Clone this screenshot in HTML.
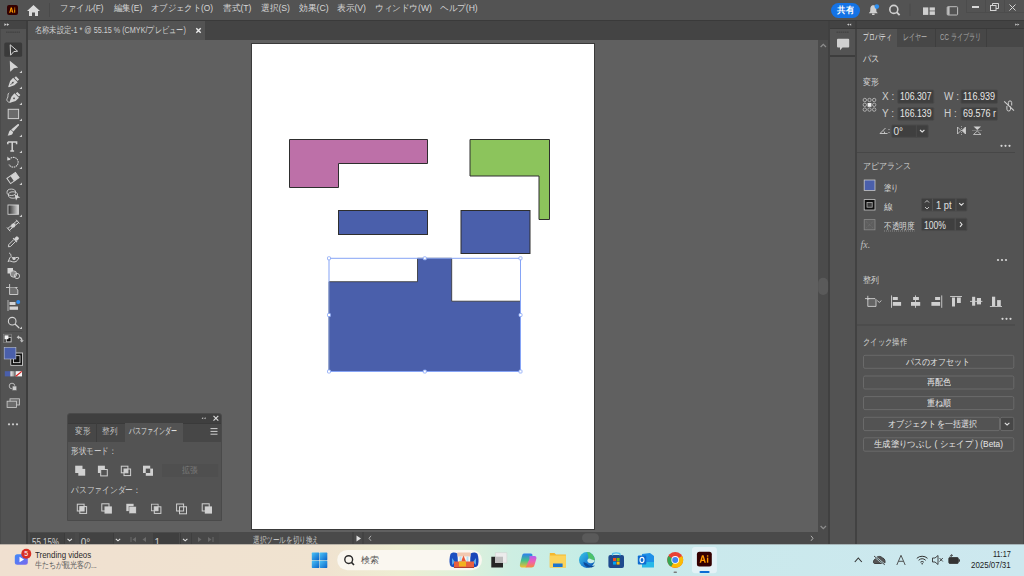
<!DOCTYPE html>
<html><head><meta charset="utf-8">
<style>
*{margin:0;padding:0;box-sizing:border-box}
html,body{width:1024px;height:576px;overflow:hidden;background:#606060;font-family:"Liberation Sans",sans-serif}
.a{position:absolute}
.t{position:absolute;white-space:nowrap;color:#d6d6d6;font-size:9px;line-height:11px;transform-origin:0 50%}
svg{position:absolute;overflow:visible}
.ic{fill:none;stroke:#d4d4d4;stroke-width:1}
.fi{fill:#d4d4d4}
</style></head><body>
<!-- MENUBAR -->
<div class="a" style="left:0;top:0;width:1024px;height:20px;background:#535353"></div>
<div class="a" style="left:0;top:20px;width:1024px;height:1px;background:#3a3a3a"></div>
<div class="a" style="left:7px;top:5px;width:11px;height:10px;background:#330000;border-radius:2px"></div>
<svg style="left:0;top:0" width="20" height="20" viewBox="0 0 20 20"><path d="M9.2 12.7 L10.7 7.5 H11.9 L13.4 12.7 H12.3 L12 11.6 H10.6 L10.3 12.7 Z M10.85 10.7 H11.75 L11.3 8.9 Z" fill="#ff9a00" fill-rule="evenodd"/><rect x="14.2" y="9.3" width="1" height="3.4" fill="#ff9a00"/><rect x="14.2" y="7.6" width="1" height="1" fill="#ff9a00"/></svg>
<svg style="left:27px;top:5px" width="13" height="11" viewBox="0 0 13 11"><path d="M6.5 0 L13 6 L11 6 L11 11 L8 11 L8 7.5 L5 7.5 L5 11 L2 11 L2 6 L0 6 Z" fill="#dcdcdc"/></svg>
<div class="a" style="left:49px;top:3px;width:1px;height:14px;background:#4a4a4a"></div>
<div class="t f" style="left:60px;top:3px;width:43.5px">ファイル(F)</div>
<div class="t f" style="left:113.5px;top:3px;width:28.3px">編集(E)</div>
<div class="t f" style="left:151px;top:3px;width:62px">オブジェクト(O)</div>
<div class="t f" style="left:223px;top:3px;width:28.5px">書式(T)</div>
<div class="t f" style="left:261px;top:3px;width:29px">選択(S)</div>
<div class="t f" style="left:298.6px;top:3px;width:29.6px">効果(C)</div>
<div class="t f" style="left:337px;top:3px;width:29px">表示(V)</div>
<div class="t f" style="left:375px;top:3px;width:57px">ウィンドウ(W)</div>
<div class="t f" style="left:440.3px;top:3px;width:37.7px">ヘルプ(H)</div>
<!-- right menubar icons -->
<div class="a" style="left:831px;top:2.5px;width:29px;height:15.5px;background:#1473e6;border-radius:8px"></div>
<div class="t f" style="left:837px;top:4.5px;width:17px;color:#fff;font-weight:bold">共有</div>
<svg style="left:0;top:0" width="966" height="20" viewBox="0 0 966 20">
<path d="M873.3 5.2 C870.8 5.2 870.3 7.5 870.3 9.3 L870.2 11.6 L868.8 13.2 H877.8 L876.4 11.6 L876.3 9.3 C876.3 7.5 875.8 5.2 873.3 5.2Z" fill="#cfcfcf"/>
<path d="M872 13.6 H874.6 V14.4 C874.6 15.2 872 15.2 872 14.4Z" fill="#cfcfcf"/>
<circle cx="876.8" cy="6.6" r="2.3" fill="#2d8ff0"/>
<circle cx="893.8" cy="9.4" r="4" fill="none" stroke="#d0d0d0" stroke-width="1.6"/>
<path d="M896.6 12.2 L899.6 15.2" stroke="#d0d0d0" stroke-width="1.8"/>
<rect x="909.5" y="3.5" width="1" height="12.5" fill="#4b4b4b"/>
<rect x="923" y="7.4" width="5.3" height="7.5" fill="#cfcfcf"/>
<rect x="929.6" y="7.4" width="5.3" height="3.2" fill="#cfcfcf"/>
<rect x="929.6" y="11.3" width="5.3" height="3.6" fill="#cfcfcf"/>
<rect x="947.2" y="6.7" width="10.4" height="8.3" rx="0.8" fill="none" stroke="#bdbdbd" stroke-width="1"/>
<rect x="947.4" y="7" width="2.2" height="7.8" fill="#bdbdbd"/>
</svg>
<div class="a" style="left:966px;top:-1px;width:59px;height:13.5px;border:1px solid #4c4c4c;border-top:none"></div>
<div class="a" style="left:985px;top:0;width:1px;height:12.5px;background:#4c4c4c"></div>
<div class="a" style="left:1004px;top:0;width:1px;height:12.5px;background:#4c4c4c"></div>
<div class="a" style="left:972px;top:6px;width:7px;height:1.5px;background:#d8d8d8"></div>
<svg style="left:989.5px;top:3px" width="9" height="8" viewBox="0 0 9 8"><rect x="0.5" y="2.5" width="5.5" height="5" class="ic" stroke="#d8d8d8"/><path d="M2.5 2.5 V0.5 H8.5 V5.5 H6" class="ic" stroke="#d8d8d8"/></svg>
<svg style="left:1009px;top:3.5px" width="7" height="7" viewBox="0 0 7 7"><path d="M0.5 0.5 L6.5 6.5 M6.5 0.5 L0.5 6.5" class="ic" stroke="#d8d8d8" stroke-width="1.3"/></svg>

<!-- TABROW -->
<div class="a" style="left:28px;top:21px;width:800px;height:19px;background:#444444"></div>
<div class="a" style="left:28px;top:21px;width:177px;height:18.5px;background:#535353"></div>
<div class="t f" style="left:35px;top:25px;width:151px;color:#d0d0d0">名称未設定-1 * @ 55.15 % (CMYK/プレビュー)</div>
<svg style="left:196px;top:27.5px" width="5" height="5" viewBox="0 0 5 5"><path d="M0.3 0.3 L4.7 4.7 M4.7 0.3 L0.3 4.7" stroke="#ececec" stroke-width="1.4"/></svg>

<!-- TOOLBAR -->
<div class="a" style="left:0;top:21px;width:26px;height:523px;background:#535353"></div>
<div class="a" style="left:0;top:21px;width:26px;height:7.5px;background:#444444"></div>
<div class="a" style="left:26px;top:21px;width:2px;height:523px;background:#3d3d3d"></div>
<div class="a" style="left:0;top:28.5px;width:1px;height:516px;background:#4a4a4a"></div>
<svg style="left:0;top:0" width="28" height="440" viewBox="0 0 28 440">
<path d="M4.4 23.2 L6.7 24.6 L4.4 26 Z M6.9 23.2 L9.2 24.6 L6.9 26 Z" fill="#d0d0d0"/>
<path d="M6 32.2 H20" stroke="#454545" stroke-width="1.6" stroke-dasharray="1.6 0.5"/>
<rect x="4.3" y="42.5" width="17.8" height="14.2" rx="1.5" fill="#3a3a3a"/>
<path d="M10.2 44.8 L17.6 51.2 L13.8 51.6 L10.6 55.2 Z" fill="none" stroke="#d6d6d6" stroke-width="1"/>
<path d="M9.8 60.8 L18.2 67.6 L14 68.2 L10.2 71.8 Z" fill="#d4d4d4"/>
<g fill="#cfcfcf">
<path d="M22 70.4 V73 H19.4 Z"/><path d="M22 86.4 V89 H19.4 Z"/><path d="M22 102.4 V105 H19.4 Z"/><path d="M22 118.4 V121 H19.4 Z"/><path d="M22 134.4 V137 H19.4 Z"/>
<path d="M22 150.4 V153 H19.4 Z"/><path d="M22 166.4 V169 H19.4 Z"/><path d="M22 182.4 V185 H19.4 Z"/><path d="M22 214.4 V217 H19.4 Z"/><path d="M22 326.4 V329 H19.4 Z"/>
</g>
<!-- pen -->
<g transform="translate(13.3 82.1) rotate(45)">
<path d="M-2.2 -6 H2.2 V-3.8 H-2.2 Z M-3.2 -3 H3.2 L3 1.5 L0.4 6.8 L-0.4 6.8 L-3 1.5 Z" fill="#d4d4d4"/>
<path d="M0 -0.5 V4" stroke="#535353" stroke-width="0.8"/><circle cx="0" cy="0.8" r="0.9" fill="#535353"/>
</g>
<!-- curvature pen -->
<g transform="translate(14.6 97.7) rotate(45)">
<path d="M-2.2 -6 H2.2 V-3.8 H-2.2 Z M-3.2 -3 H3.2 L3 1.5 L0.4 6.8 L-0.4 6.8 L-3 1.5 Z" fill="#d4d4d4"/>
<circle cx="0" cy="0.8" r="0.9" fill="#535353"/>
</g>
<path d="M9.2 92.8 C7 93.8 8.8 96.5 7.2 98.5 C6 100.2 7.8 102.8 10.4 102.2" fill="none" stroke="#d4d4d4" stroke-width="0.9"/>
<!-- rect -->
<rect x="8.2" y="109.3" width="10.4" height="9.3" fill="#6b6b6b" stroke="#cfcfcf" stroke-width="1"/>
<!-- brush -->
<path d="M17.6 124.2 C18.6 123.6 19.4 124.4 18.8 125.4 L13.4 131.6 L11.2 129.6 Z" fill="#d4d4d4"/>
<path d="M10.9 130.1 C8.8 130.4 9.2 133.4 7.6 135.6 C10.8 135.6 13.2 134.4 13 132 Z" fill="#d4d4d4"/>
<!-- type -->
<path d="M7.8 142 H16.6 V144.3 M7.8 142 V144.3 M12.2 142 V150.7 M10.3 150.9 H14.1" fill="none" stroke="#d4d4d4" stroke-width="1.5"/>
<!-- rotate -->
<path d="M9.2 159.5 A4.9 4.9 0 1 1 8.9 164.5" fill="none" stroke="#d4d4d4" stroke-width="1.1" stroke-dasharray="1.5 0.7"/>
<path d="M7.4 156.6 L10.6 159.8 L7.2 160.6 Z" fill="#d4d4d4"/>
<!-- eraser -->
<g transform="translate(13 178) rotate(-35)">
<rect x="-5.2" y="-3.2" width="10.4" height="6.4" fill="none" stroke="#d4d4d4" stroke-width="1"/>
<rect x="-1" y="-3.2" width="6.2" height="6.4" fill="#d4d4d4"/>
</g>
<!-- shape builder -->
<ellipse cx="11.3" cy="192.3" rx="4.3" ry="3.2" fill="none" stroke="#d4d4d4" stroke-width="0.9"/>
<ellipse cx="13" cy="195" rx="4.6" ry="3.2" fill="none" stroke="#d4d4d4" stroke-width="0.9"/>
<path d="M14.5 194 L20.3 197.5 L17.5 198.1 L16 200.5 Z" fill="#d4d4d4"/>
<!-- gradient -->
<defs><linearGradient id="gr" x1="0" x2="1" y1="0" y2="0"><stop offset="0" stop-color="#2a2a2a"/><stop offset="1" stop-color="#d8d8d8"/></linearGradient>
<linearGradient id="gr2" x1="0" x2="1"><stop offset="0" stop-color="#999"/><stop offset="1" stop-color="#eee"/></linearGradient></defs>
<rect x="8" y="205" width="10.5" height="9.3" fill="url(#gr)" stroke="#d0d0d0" stroke-width="0.9"/>
<!-- width -->
<g transform="translate(13.2 225.5) rotate(-40)">
<path d="M-6 -1.2 H6 M-6 1.2 H6 M-6 -2.5 V2.5 M6 -2.5 V2.5" fill="none" stroke="#d4d4d4" stroke-width="0.9"/>
<path d="M-3 0 L0 -2.2 L3 0 L0 2.2 Z" fill="#d4d4d4"/>
</g>
<!-- eyedropper -->
<g transform="translate(13.2 242) rotate(45)">
<rect x="-1.8" y="-7" width="3.6" height="4.2" rx="1.2" fill="#d4d4d4"/>
<path d="M-2.8 -2.6 H2.8" stroke="#d4d4d4" stroke-width="1"/>
<path d="M-1.3 -2.2 V5 L0 6.8 L1.3 5 V-2.2" fill="none" stroke="#d4d4d4" stroke-width="0.9"/>
</g>
<!-- blend -->
<path d="M9 253 C12 254 10 256 12 257.5 C14.5 259.5 16.5 256 19 258 C17.5 259.5 17.5 261.8 14 262 C11.5 262 10.5 260 8 261.5 C9.5 259.5 9 258.3 10.5 257" fill="none" stroke="#d4d4d4" stroke-width="1"/>
<circle cx="14" cy="258.5" r="1.6" fill="#d4d4d4"/>
<!-- symbol sprayer / live paint -->
<rect x="7.5" y="268" width="5.5" height="5.5" fill="#d4d4d4"/>
<circle cx="13.5" cy="274" r="3.2" fill="#8a8a8a" stroke="#d4d4d4" stroke-width="0.8"/>
<circle cx="17" cy="276" r="2.6" fill="none" stroke="#d4d4d4" stroke-width="0.9"/>
<!-- artboard -->
<path d="M9.6 284 V287 M6 287.5 H17.5" fill="none" stroke="#d4d4d4" stroke-width="0.9"/>
<path d="M9.6 287.5 V294.5 H17.8 V290 L15.3 287.5" fill="#6f6f6f" stroke="#d4d4d4" stroke-width="0.9"/>
<!-- graph -->
<path d="M8 300 V311" stroke="#cfcfcf" stroke-width="0.8"/>
<rect x="9.5" y="302" width="6" height="3" fill="#d4d4d4"/>
<rect x="9.5" y="306.5" width="8.5" height="3.3" fill="#d4d4d4"/>
<circle cx="18.2" cy="302" r="2" fill="#2f8cf0"/>
<!-- zoom -->
<circle cx="12.2" cy="321.2" r="3.8" fill="none" stroke="#d4d4d4" stroke-width="1.1"/>
<path d="M15 324 L19.2 328" stroke="#d4d4d4" stroke-width="1.2"/>
<path d="M4.5 331.5 H22.5" stroke="#474747" stroke-width="0.8"/>
<!-- default colors -->
<rect x="3.6" y="334.2" width="8" height="8.3" fill="none" stroke="#8a8a8a" stroke-width="0.6"/>
<rect x="6.4" y="337.4" width="4.6" height="4.4" fill="#111" stroke="#cfcfcf" stroke-width="0.7"/>
<rect x="4.6" y="335.4" width="3.8" height="3.8" fill="#f4f4f4"/>
<path d="M18.3 337.2 C20.5 337.2 21.8 338.5 21.8 340.5" fill="none" stroke="#c4c4c4" stroke-width="1.4"/>
<path d="M16.6 337.2 L19 335.2 V339.2 Z" fill="#c4c4c4"/>
<path d="M19.8 340.2 H23.8 L21.8 342.6 Z" fill="#c4c4c4"/>
<!-- fill/stroke -->
<rect x="10.8" y="353" width="11.8" height="12.3" fill="#111" stroke="#e0e0e0" stroke-width="0.8"/>
<rect x="13.4" y="355.7" width="6.6" height="7" fill="none" stroke="#e8e8e8" stroke-width="0.8"/>
<rect x="4.2" y="347.6" width="11.7" height="11.4" fill="#4a5fab" stroke="#b8c0d8" stroke-width="0.6"/>
<!-- color mode -->
<rect x="4.8" y="371.2" width="5.6" height="5.2" fill="#4a5fab"/>
<rect x="10.4" y="371.2" width="4.3" height="5.2" fill="url(#gr3)"/>
<rect x="15.6" y="371.2" width="6.4" height="5.2" fill="#f4f4f4"/>
<path d="M15.8 376.2 L21.8 371.4" stroke="#e02020" stroke-width="1.2"/>
<defs><linearGradient id="gr3" x1="0" x2="1"><stop offset="0" stop-color="#f0f0f0"/><stop offset="1" stop-color="#888"/></linearGradient></defs>
<!-- draw mode -->
<circle cx="12" cy="386" r="2.8" fill="none" stroke="#cfcfcf" stroke-width="0.8"/>
<rect x="12.2" y="386" width="4.6" height="4.6" fill="#cfcfcf" stroke="#535353" stroke-width="0.6"/>
<!-- screen mode -->
<rect x="10" y="398.8" width="9.4" height="6.2" fill="#6a6a6a" stroke="#cfcfcf" stroke-width="0.8"/>
<rect x="7.1" y="401.2" width="9.4" height="6.2" fill="#6a6a6a" stroke="#cfcfcf" stroke-width="0.8"/>
<circle cx="9" cy="424.3" r="1.1" fill="#cfcfcf"/><circle cx="13" cy="424.3" r="1.1" fill="#cfcfcf"/><circle cx="17" cy="424.3" r="1.1" fill="#cfcfcf"/>
</svg>

<!-- CANVAS -->
<div class="a" style="left:28px;top:40px;width:790px;height:492px;background:#606060"></div>
<div class="a" style="left:251px;top:43px;width:344px;height:487px;background:#3a3a3a"></div>
<div class="a" style="left:252px;top:44px;width:342px;height:485px;background:#ffffff"></div>
<svg style="left:0;top:0" width="1024" height="576" viewBox="0 0 1024 576">
<path d="M289.5 139.5 H427.5 V163.5 H338.5 V187.5 H289.5 Z" fill="#bd70a8" stroke="#2e2e2e" stroke-width="1"/>
<path d="M470 139.5 H549.5 V219.5 H539 V176 H470 Z" fill="#8cc45c" stroke="#2e2e2e" stroke-width="1"/>
<rect x="338.5" y="210.5" width="89" height="24" fill="#4a5fab" stroke="#2e2e2e" stroke-width="1"/>
<rect x="461" y="210.5" width="69" height="43" fill="#4a5fab" stroke="#2e2e2e" stroke-width="1"/>
<path d="M329 371.5 V281.7 H417.5 V258.3 H451.7 V301.2 H520.5 V371.5 Z" fill="#4a5fab" stroke="#2e2e2e" stroke-width="0.8"/>
<rect x="329" y="258.3" width="191.5" height="113.2" fill="none" stroke="#86a4f6" stroke-width="1"/>
<g fill="#fff" stroke="#86a4f6" stroke-width="0.8">
<rect x="327.5" y="256.8" width="3" height="3" rx="0.6"/><rect x="423.3" y="256.8" width="3" height="3" rx="0.6"/><rect x="519" y="256.8" width="3" height="3" rx="0.6"/>
<rect x="327.5" y="313.5" width="3" height="3" rx="0.6"/><rect x="519" y="313.5" width="3" height="3" rx="0.6"/>
<rect x="327.5" y="370" width="3" height="3" rx="0.6"/><rect x="423.3" y="370" width="3" height="3" rx="0.6"/><rect x="519" y="370" width="3" height="3" rx="0.6"/>
</g>
</svg>
<div class="a" style="left:67px;top:413px;width:155px;height:108px;background:#535353;border:1px solid #4a4a4a;border-radius:3px 3px 0 0;overflow:hidden">
 <div class="a" style="left:0;top:0;width:155px;height:9px;background:#3f3f3f"></div>
 <div class="a" style="left:0;top:9px;width:155px;height:18.5px;background:#474747;border-top:1px solid #3a3a3a"></div>
 <div class="a" style="left:28px;top:9px;width:1px;height:18.5px;background:#3d3d3d"></div>
 <div class="a" style="left:56.5px;top:9px;width:58.5px;height:18.5px;background:#535353"></div>
</div>
<svg style="left:0;top:0" width="230" height="525" viewBox="0 0 230 525">
<path d="M203.2 417.2 L201.6 418.2 L203.2 419.2 Z M205.6 417.2 L204 418.2 L205.6 419.2 Z" fill="#c8c8c8"/>
<path d="M213.5 415.8 L218.3 420.6 M218.3 415.8 L213.5 420.6" stroke="#d8d8d8" stroke-width="1.2"/>
<path d="M210.5 428.6 H217.5 M210.5 431.4 H217.5 M210.5 434.2 H217.5" stroke="#cfcfcf" stroke-width="1"/>
<g fill="#d0d0d0">
<rect x="75.2" y="465.7" width="7.3" height="7.3"/><rect x="78.3" y="468.9" width="6.9" height="6.8"/>
<rect x="97.9" y="465.7" width="7" height="7.3"/>
</g>
<rect x="100.7" y="469.5" width="6.6" height="6.4" fill="#535353" stroke="#d0d0d0" stroke-width="1"/>
<g fill="none" stroke="#d0d0d0" stroke-width="1">
<rect x="121.3" y="466.2" width="6.6" height="6.6"/><rect x="124" y="469" width="6.6" height="6.6"/>
</g>
<rect x="124" y="469" width="3.9" height="3.8" fill="#d0d0d0"/>
<g fill="#d0d0d0"><rect x="143" y="465.7" width="7.2" height="7.3"/><rect x="145.8" y="468.6" width="7.2" height="7.2"/></g>
<rect x="145.8" y="468.6" width="4.4" height="4.4" fill="#535353"/>
<rect x="162" y="464" width="56.2" height="12.7" fill="#4f4f4f"/>
<!-- pathfinder row -->
<g fill="none" stroke="#d0d0d0" stroke-width="1">
<rect x="77.3" y="504.2" width="6.8" height="6.8"/><rect x="79.8" y="506.6" width="6.8" height="6.8"/>
</g>
<rect x="79.8" y="506.6" width="4.3" height="4.4" fill="#d0d0d0"/>
<rect x="101.8" y="503.8" width="7.2" height="7.2" fill="none" stroke="#d0d0d0" stroke-width="1"/>
<rect x="104.5" y="506.4" width="7.4" height="7.2" fill="#d0d0d0"/>
<rect x="126.3" y="503.8" width="7.3" height="7.3" fill="#d0d0d0"/><rect x="129" y="506.4" width="7.2" height="7.2" fill="#d0d0d0" stroke="#535353" stroke-width="0.5"/>
<rect x="151.5" y="504.2" width="6.6" height="6.6" fill="none" stroke="#d0d0d0" stroke-width="0.8"/>
<rect x="154.3" y="506.8" width="6.6" height="6.6" fill="none" stroke="#d0d0d0" stroke-width="1"/>
<rect x="154.3" y="506.8" width="3.8" height="4" fill="#d0d0d0"/>
<rect x="176.6" y="504" width="7" height="7" fill="none" stroke="#d0d0d0" stroke-width="1"/>
<rect x="179.5" y="506.8" width="7" height="7" fill="none" stroke="#d0d0d0" stroke-width="1"/>
<rect x="202.2" y="503.8" width="7" height="7.2" fill="#535353" stroke="#d0d0d0" stroke-width="1"/>
<rect x="204.8" y="506.4" width="7.2" height="7.2" fill="#d0d0d0"/>
</svg>
<div class="t f" style="left:74.7px;top:426px;width:15.2px;color:#bdbdbd">変形</div>
<div class="t f" style="left:102px;top:426px;width:15.2px;color:#bdbdbd">整列</div>
<div class="t f" style="left:128.5px;top:426px;width:48px;color:#e2e2e2">パスファインダー</div>
<div class="t f" style="left:71.2px;top:446px;width:45px;color:#d0d0d0">形状モード：</div>
<div class="t f" style="left:181.8px;top:465px;width:15.6px;color:#7a7a7a">拡張</div>
<div class="t f" style="left:71px;top:484.5px;width:70px;color:#d0d0d0">パスファインダー：</div>

<!-- VSCROLL -->
<div class="a" style="left:818px;top:40px;width:10px;height:504px;background:#4b4b4b"></div>
<div class="a" style="left:828px;top:21px;width:2px;height:523px;background:#404040"></div>

<!-- DOCK -->
<div class="a" style="left:830px;top:21px;width:25px;height:523px;background:#535353"></div>
<div class="a" style="left:855px;top:21px;width:2px;height:523px;background:#424242"></div>
<!-- PROPS -->
<div class="a" style="left:857px;top:21px;width:167px;height:523px;background:#535353"></div>
<div class="a" style="left:1022.5px;top:47px;width:1.5px;height:497px;background:#494949"></div>
<div class="a" style="left:830px;top:21px;width:194px;height:7px;background:#434343"></div>
<div class="a" style="left:830px;top:28px;width:194px;height:1px;background:#3a3a3a"></div>
<div class="a" style="left:855px;top:21px;width:2px;height:7px;background:#3d3d3d"></div>
<div class="a" style="left:830px;top:55px;width:25px;height:1.8px;background:#3d3d3d"></div>
<div class="a" style="left:857px;top:29px;width:167px;height:18px;background:#474747"></div>
<div class="a" style="left:857px;top:29px;width:40px;height:18px;background:#535353"></div>
<div class="a" style="left:934.5px;top:29px;width:1px;height:18px;background:#3e3e3e"></div>
<div class="a" style="left:986.4px;top:29px;width:1px;height:18px;background:#3e3e3e"></div>
<svg style="left:0;top:0" width="1024" height="544" viewBox="0 0 1024 544">
<path d="M849 23.4 L847 24.6 L849 25.8 Z M851.2 23.4 L849.2 24.6 L851.2 25.8 Z" fill="#c8c8c8"/>
<path d="M1015.2 23.4 L1017.2 24.6 L1015.2 25.8 Z M1017.4 23.4 L1019.4 24.6 L1017.4 25.8 Z" fill="#c8c8c8"/>
<path d="M836.5 32.3 H849" stroke="#454545" stroke-width="1.6" stroke-dasharray="1.6 0.5"/>
<path d="M838 38.8 H848.2 Q849.2 38.8 849.2 39.8 V46.5 Q849.2 47.5 848.2 47.5 H842.5 L840 50.3 V47.5 H838 Q837 47.5 837 46.5 V39.8 Q837 38.8 838 38.8Z" fill="#d0d0d0"/>
<!-- reference point -->
<g fill="none" stroke="#cfcfcf" stroke-width="0.7">
<circle cx="864.8" cy="100" r="1.7"/><circle cx="869.5" cy="100" r="1.7"/><circle cx="874.2" cy="100" r="1.7"/>
<circle cx="864.8" cy="104.8" r="1.7"/><circle cx="874.2" cy="104.8" r="1.7"/>
<circle cx="864.8" cy="109.6" r="1.7"/><circle cx="869.5" cy="109.6" r="1.7"/><circle cx="874.2" cy="109.6" r="1.7"/>
</g>
<rect x="867.6" y="103" width="3.8" height="3.8" fill="#f0f0f0"/>
<!-- fields -->
<g fill="#3f3f3f" stroke="#4a4a4a" stroke-width="1">
<rect x="897.8" y="90" width="36" height="13.3" rx="1"/><rect x="961" y="90" width="36.4" height="13.3" rx="1"/>
<rect x="897.8" y="107.7" width="36" height="12.5" rx="1"/><rect x="961" y="107.7" width="36.4" height="12.5" rx="1"/>
<rect x="891.8" y="125" width="36.4" height="12.3" rx="1"/>
</g>
<path d="M916.4 125 V137.3" stroke="#4a4a4a" stroke-width="1"/>
<path d="M920 130 L922.2 132 L924.4 130" fill="none" stroke="#e0e0e0" stroke-width="1.1"/>
<!-- link -->
<g fill="none" stroke="#cfcfcf" stroke-width="1">
<path d="M1008.3 105.8 V102.6 A1.7 1.7 0 0 1 1011.7 102.6 V105.5"/>
<path d="M1010.5 106.5 V109.2 A1.8 1.8 0 0 1 1006.9 109.2 V106"/>
</g>
<path d="M1004.2 101.3 L1014 110.6" stroke="#cfcfcf" stroke-width="1.1"/>
<!-- angle -->
<path d="M885.5 128 L880 133.5 H887.5 M883.5 131 A2 2 0 0 1 884.5 133.5" fill="none" stroke="#cfcfcf" stroke-width="0.9"/>
<circle cx="889" cy="129.5" r="0.6" fill="#cfcfcf"/><circle cx="889" cy="132.5" r="0.6" fill="#cfcfcf"/>
<!-- flips -->
<path d="M957.5 127 V134 L961 130.5 Z M965.5 127 V134 L962 130.5 Z" fill="none" stroke="#cfcfcf" stroke-width="0.8"/>
<path d="M965.5 127 V134 L962 130.5 Z" fill="#cfcfcf"/>
<path d="M961.5 126 V135" stroke="#cfcfcf" stroke-width="0.6" stroke-dasharray="1 1"/>
<path d="M973.5 126.5 H981 L977.3 130 Z" fill="#cfcfcf"/>
<path d="M973.5 134.5 H981 L977.3 131 Z" fill="none" stroke="#cfcfcf" stroke-width="0.8"/>
<path d="M972.5 130.5 H982" stroke="#cfcfcf" stroke-width="0.6" stroke-dasharray="1 1"/>
<g fill="#d6d6d6"><circle cx="1001.5" cy="145.8" r="1.1"/><circle cx="1005.5" cy="145.8" r="1.1"/><circle cx="1009.5" cy="145.8" r="1.1"/></g>
<path d="M857 152.5 H1015" stroke="#474747" stroke-width="1"/>
<!-- appearance -->
<rect x="864.2" y="180" width="10.8" height="10.4" fill="#4a5fab" stroke="#c8c8c8" stroke-width="0.8"/>
<rect x="864.2" y="199.6" width="10.8" height="10.4" fill="#0e0e0e" stroke="#c8c8c8" stroke-width="0.8"/>
<rect x="867" y="202.4" width="5.2" height="4.8" fill="#3a3a3a" stroke="#b0b0b0" stroke-width="0.8"/>
<rect x="864.2" y="219.6" width="10.8" height="10.2" fill="#5e5e5e" stroke="#8a8a8a" stroke-width="0.8"/>
<path d="M866 221.5 L873.2 228 M873.2 221.5 L866 228" stroke="#777" stroke-width="0.7" stroke-dasharray="1 1"/>
<g fill="#3f3f3f" stroke="#4a4a4a" stroke-width="1">
<rect x="921.6" y="198.4" width="45.3" height="12.6" rx="1"/>
<rect x="921.6" y="218.2" width="45.3" height="12.4" rx="1"/>
</g>
<path d="M932.5 198.4 V211 M955.9 198.4 V211 M955.2 218.2 V230.6" stroke="#535353" stroke-width="1.2"/>
<path d="M925 202.5 L927 200.5 L929 202.5 M925 207 L927 209 L929 207" fill="none" stroke="#cfcfcf" stroke-width="0.9"/>
<path d="M959.2 203.2 L961.4 205.2 L963.6 203.2" fill="none" stroke="#e0e0e0" stroke-width="1.1"/>
<path d="M960 222 L962 224.4 L960 226.8" fill="none" stroke="#e0e0e0" stroke-width="1.1"/>
<path d="M884 231 H914.5" stroke="#9a9a9a" stroke-width="0.8" stroke-dasharray="1 1"/>
<g fill="#d6d6d6"><circle cx="998" cy="260" r="1.1"/><circle cx="1002" cy="260" r="1.1"/><circle cx="1006" cy="260" r="1.1"/></g>
<!-- align icons -->
<path d="M867.8 298.6 H875 L876 299.6 V306.4 H867.8 Z" fill="#646464" stroke="#cfcfcf" stroke-width="0.9"/>
<path d="M865 298.6 H870 M867.8 295.8 V300" stroke="#cfcfcf" stroke-width="0.9"/>
<path d="M877.2 300.6 L879.3 302.4 L881.4 300.6" fill="none" stroke="#cfcfcf" stroke-width="0.9"/>
<g fill="#d0d0d0">
<rect x="891" y="295.4" width="0.9" height="12.4"/><rect x="892.8" y="297" width="5" height="3"/><rect x="892.8" y="302" width="8.3" height="3.8"/>
<rect x="915" y="295.4" width="0.9" height="12.4"/><rect x="913.1" y="297" width="5.8" height="3"/><rect x="911" y="302" width="9.2" height="3.8"/>
<rect x="941.3" y="295.4" width="0.9" height="12.4"/><rect x="935.1" y="297" width="5" height="3"/><rect x="931.4" y="302" width="8.7" height="3.8"/>
<rect x="950.1" y="296.1" width="11.9" height="0.9"/><rect x="952" y="297.5" width="3" height="9"/><rect x="957" y="297.5" width="3.8" height="5.5"/>
<rect x="970" y="300.9" width="12.4" height="0.9"/><rect x="972.1" y="296.8" width="3.1" height="8.9"/><rect x="976.9" y="298" width="4.1" height="6.4"/>
<rect x="989.9" y="306.1" width="12.1" height="0.9"/><rect x="992" y="296.7" width="3.2" height="9.3"/><rect x="997.1" y="300.1" width="3.7" height="5.9"/>
</g>
<g fill="#d6d6d6"><circle cx="1002.5" cy="318.8" r="1.1"/><circle cx="1006.5" cy="318.8" r="1.1"/><circle cx="1010.5" cy="318.8" r="1.1"/></g>
<path d="M857 325 H1015" stroke="#474747" stroke-width="1"/>
<!-- quick action buttons -->
<g fill="#535353" stroke="#6a6a6a" stroke-width="1">
<rect x="863.5" y="355.3" width="150.3" height="13" rx="1.5"/>
<rect x="863.5" y="376" width="150.3" height="13" rx="1.5"/>
<rect x="863.5" y="396.6" width="150.3" height="13" rx="1.5"/>
<rect x="863.5" y="417.3" width="136" height="13.3" rx="1.5"/>
<rect x="863.5" y="437.8" width="150.3" height="13.4" rx="1.5"/>
</g>
<rect x="1000.5" y="417.3" width="13.3" height="13.3" rx="1.5" fill="#474747" stroke="#6a6a6a" stroke-width="1"/>
<path d="M1004.8 422.8 L1007.1 425 L1009.4 422.8" fill="none" stroke="#e0e0e0" stroke-width="1.1"/>
</svg>
<div class="t f" style="left:862.7px;top:32px;width:29px;color:#e6e6e6">プロパティ</div>
<div class="t f" style="left:903px;top:32px;width:24.3px;color:#a8a8a8">レイヤー</div>
<div class="t f" style="left:940px;top:32px;width:41.2px;color:#a8a8a8">CC ライブラリ</div>
<div class="t f" style="left:862.7px;top:52.5px;width:16.5px;color:#d8d8d8;font-size:10px;line-height:12px">パス</div>
<div class="t f" style="left:863.4px;top:77px;width:15.8px;color:#cfcfcf">変形</div>
<div class="t" style="left:882px;top:91px;color:#cfcfcf;font-size:10px;line-height:12px">X :</div>
<div class="t" style="left:882px;top:108px;color:#cfcfcf;font-size:10px;line-height:12px">Y :</div>
<div class="t" style="left:944px;top:91px;color:#cfcfcf;font-size:10px;line-height:12px">W :</div>
<div class="t" style="left:944px;top:108px;color:#cfcfcf;font-size:10px;line-height:12px">H :</div>
<div class="t f" style="left:900px;top:91px;width:31.5px;color:#e8e8e8;font-size:10px;line-height:12px">106.307</div>
<div class="t f" style="left:900px;top:108px;width:31.5px;color:#e8e8e8;font-size:10px;line-height:12px">166.139</div>
<div class="t f" style="left:963px;top:91px;width:32px;color:#e8e8e8;font-size:10px;line-height:12px">116.939</div>
<div class="t f" style="left:963px;top:108px;width:33px;color:#e8e8e8;font-size:10px;line-height:12px">69.576 r</div>
<div class="t" style="left:893.5px;top:125.5px;color:#e0e0e0;font-size:10px;line-height:12px">0°</div>
<div class="t f" style="left:863.1px;top:161px;width:48px;color:#cfcfcf">アピアランス</div>
<div class="t f" style="left:884px;top:183px;width:14.5px;color:#d8d8d8">塗り</div>
<div class="t" style="left:884px;top:202px;color:#d8d8d8">線</div>
<div class="t f" style="left:936.3px;top:199.5px;width:15.5px;color:#e0e0e0;font-size:10px;line-height:12px">1 pt</div>
<div class="t f" style="left:884px;top:220.5px;width:30.5px;color:#d8d8d8">不透明度</div>
<div class="t f" style="left:924px;top:219.5px;width:22px;color:#e0e0e0;font-size:10px;line-height:12px">100%</div>
<div class="t" style="left:860.5px;top:238.5px;color:#bdbdbd;font-size:10px;line-height:12px;font-style:italic;font-family:'Liberation Serif',serif">fx.</div>
<div class="t f" style="left:863px;top:275px;width:16px;color:#cfcfcf">整列</div>
<div class="t f" style="left:863.2px;top:337px;width:44px;color:#cfcfcf">クイック操作</div>
<div class="t f" style="left:906px;top:356.5px;width:64px;color:#e6e6e6">パスのオフセット</div>
<div class="t f" style="left:927px;top:377px;width:24px;color:#e6e6e6">再配色</div>
<div class="t f" style="left:927px;top:398px;width:24px;color:#e6e6e6">重ね順</div>
<div class="t f" style="left:888px;top:418.5px;width:89px;color:#e6e6e6">オブジェクトを一括選択</div>
<div class="t f" style="left:874px;top:439px;width:129px;color:#e6e6e6">生成塗りつぶし ( シェイプ ) (Beta)</div>

<!-- STATUSBAR -->
<div class="a" style="left:28px;top:532px;width:790px;height:12px;background:#4a4a4a"></div>
<div class="a" style="left:30.4px;top:533.4px;width:34px;height:11px;background:#424242"></div>
<div class="a" style="left:64.4px;top:533.4px;width:11px;height:11px;background:#474747;border-left:1px solid #3c3c3c"></div>
<div class="a" style="left:79px;top:533.4px;width:33.5px;height:11px;background:#424242"></div>
<div class="a" style="left:112.5px;top:533.4px;width:11.2px;height:11px;background:#474747;border-left:1px solid #3c3c3c"></div>
<div class="a" style="left:124px;top:533.4px;width:28.8px;height:11px;background:#474747"></div>
<div class="a" style="left:152.8px;top:533.4px;width:26.7px;height:11px;background:#3f3f3f"></div>
<div class="a" style="left:179.5px;top:533.4px;width:11.6px;height:11px;background:#474747;border-left:1px solid #3c3c3c"></div>
<div class="a" style="left:191.1px;top:533.4px;width:28px;height:11px;background:#474747;border-left:1px solid #3f3f3f"></div>
<div class="t f" style="left:32.3px;top:536.5px;width:27px;font-size:10px;color:#cfcfcf;line-height:11px">55.15%</div>
<div class="t" style="left:80.7px;top:536.5px;font-size:10px;color:#cfcfcf;line-height:11px">0°</div>
<div class="t" style="left:154.5px;top:536.5px;font-size:10px;color:#cfcfcf;line-height:11px">1</div>
<svg style="left:0;top:0" width="830" height="560" viewBox="0 0 830 560">
<path d="M67.5 538.8 L69.7 540.8 L71.9 538.8 M115.8 538.8 L118 540.8 L120.2 538.8 M183 538.8 L185.2 540.8 L187.4 538.8" fill="none" stroke="#e0e0e0" stroke-width="1.1"/>
<g fill="#6a6a6a"><rect x="130.5" y="537" width="1" height="5"/><path d="M136 537 V542 L132.5 539.5Z"/><path d="M146 537 V542 L142.5 539.5Z"/>
<path d="M198 537 V542 L201.5 539.5Z"/><path d="M208 537 V542 L211.5 539.5Z"/><rect x="212.5" y="537" width="1" height="5"/></g>
<path d="M353 532 V544 M363 532 V544" stroke="#3d3d3d" stroke-width="1"/>
<path d="M356.5 535.5 V541.5 L361 538.5 Z" fill="#e0e0e0"/>
<path d="M371 535.8 L369 538.3 L371 540.8" fill="none" stroke="#bdbdbd" stroke-width="0.9"/>
<rect x="582" y="533.2" width="17" height="9.6" rx="4.8" fill="#5a5a5a"/>
<rect x="818.2" y="277.7" width="9.9" height="17.2" rx="4.9" fill="#5a5a5a"/>
<path d="M811 535.8 L813 538.3 L811 540.8" fill="none" stroke="#bdbdbd" stroke-width="0.9"/>
<path d="M820.6 47 L823.3 44.4 L826 47" fill="none" stroke="#8c8c8c" stroke-width="1.3"/>
<path d="M820.6 526 L823.3 528.6 L826 526" fill="none" stroke="#8c8c8c" stroke-width="1.3"/>
</svg>
<div class="t f" style="left:252.5px;top:535px;width:66px;color:#c8c8c8">選択ツールを切り換え</div>

<!-- TASKBAR -->
<div class="a" style="left:0;top:544px;width:1024px;height:32px;background:linear-gradient(90deg,#f0e0d0 0%,#f0e3d0 32%,#eeeed3 39%,#e0f0da 45%,#cdeee2 50%,#c6ede6 57%,#cae9ec 68%,#cde8ef 100%)"></div>
<div class="a" style="left:0;top:544px;width:1024px;height:1px;background:rgba(120,120,120,0.45)"></div>
<svg style="left:0;top:0" width="1024" height="576" viewBox="0 0 1024 576">
<defs>
<linearGradient id="vid" x1="0" y1="0" x2="1" y2="1"><stop offset="0" stop-color="#3d8af7"/><stop offset="1" stop-color="#7b68ee"/></linearGradient>
<linearGradient id="win" x1="0" y1="0" x2="1" y2="1"><stop offset="0" stop-color="#4cc4f8"/><stop offset="1" stop-color="#0a64c8"/></linearGradient>
<linearGradient id="cop" x1="0" y1="0" x2="1" y2="1"><stop offset="0" stop-color="#2f8cf5"/><stop offset="0.45" stop-color="#8ad05a"/><stop offset="0.6" stop-color="#f7b52e"/><stop offset="1" stop-color="#e85cc8"/></linearGradient>
<linearGradient id="edge" x1="0" y1="0" x2="1" y2="1"><stop offset="0" stop-color="#3bc7e0"/><stop offset="0.6" stop-color="#1b7fd6"/><stop offset="1" stop-color="#0c4fa8"/></linearGradient>
<linearGradient id="thumb" x1="0" y1="0" x2="1" y2="0"><stop offset="0" stop-color="#1e4fb8"/><stop offset="0.25" stop-color="#8fc4e8"/><stop offset="0.5" stop-color="#f0a030"/><stop offset="0.75" stop-color="#8fc4e8"/><stop offset="1" stop-color="#1e4fb8"/></linearGradient>
</defs>
<!-- widget -->
<rect x="14.8" y="554.2" width="13" height="10.5" rx="2.5" fill="url(#vid)"/>
<path d="M19.5 556.8 V562.3 L24 559.5 Z" fill="#fff"/>
<circle cx="26.3" cy="553.8" r="5" fill="#d93025"/>
<!-- windows logo -->
<g fill="url(#win)">
<rect x="311.8" y="552.6" width="7.5" height="7.4" rx="0.6"/><rect x="319.8" y="552.6" width="7.5" height="7.4" rx="0.6"/>
<rect x="311.8" y="560.5" width="7.5" height="7.4" rx="0.6"/><rect x="319.8" y="560.5" width="7.5" height="7.4" rx="0.6"/>
</g>
<!-- search -->
<rect x="337.2" y="549.9" width="144.8" height="20.3" rx="10.15" fill="#faf7f0"/>
<circle cx="348.7" cy="559.6" r="3.9" fill="none" stroke="#2a2a2a" stroke-width="1.4"/>
<path d="M351.5 562.4 L354 565" stroke="#2a2a2a" stroke-width="1.6"/>
<path d="M450.5 554 C452 552 455 552 457.5 553.5 L458 566 C455 568 451 567.5 450 565 C449 561 449.5 557 450.5 554Z" fill="#1d4fc0"/>
<path d="M477.5 554 C476 552 473 552 470.5 553.5 L470 566 C473 568 477 567.5 478 565 C479 561 478.5 557 477.5 554Z" fill="#1a45b8"/>
<path d="M452 558 L455 562 L452 565 Z M476 558 L473 562 L476 565 Z" fill="#5aa8e8"/>
<rect x="457.5" y="552.5" width="13" height="4" fill="#f2c8b0"/>
<path d="M463.5 555.5 L466 561.5 H461 Z" fill="#e8583a"/>
<rect x="459.5" y="556.5" width="2" height="6" fill="#b8e0f5"/><rect x="466.5" y="556.5" width="2" height="6" fill="#b8e0f5"/>
<rect x="454" y="561.5" width="20" height="6" fill="#e86040"/>
<rect x="459" y="561.5" width="7" height="5" fill="#f2b21e"/>
<rect x="454" y="567" width="20" height="1" fill="#b04030"/>
<!-- task view -->
<rect x="495.2" y="552.8" width="11.7" height="10.2" fill="#ececec" stroke="#d0d0d0" stroke-width="0.5"/>
<path d="M491.3 556.7 H495.2 V563 H503 V567.4 H491.3 Z" fill="#262626"/>
<rect x="495.2" y="556.7" width="7.8" height="6.3" fill="#bdbdbd"/>
<!-- copilot -->
<defs><linearGradient id="copL" x1="0" y1="0" x2="0" y2="1"><stop offset="0" stop-color="#2a7ff0"/><stop offset="0.5" stop-color="#46c08a"/><stop offset="1" stop-color="#f5c030"/></linearGradient>
<linearGradient id="copR" x1="0" y1="0" x2="0" y2="1"><stop offset="0" stop-color="#b060f0"/><stop offset="0.5" stop-color="#f060b0"/><stop offset="1" stop-color="#f58a40"/></linearGradient></defs>
<path d="M524 553.5 H530.5 C532.5 553.5 533 555 532 557 L528 565.5 C527.3 567 526.5 567.5 525 567.5 H522 C520.2 567.5 519.5 566 520 564 L522 556 C522.5 554.3 523 553.5 524 553.5Z" fill="url(#copL)"/>
<path d="M529.5 556 H534.5 C536.3 556 536.8 557.5 536.3 559 L534.5 565 C534 566.8 533 567.5 531.5 567.5 H525.5 L529.5 559 Z" fill="url(#copR)"/>
<!-- explorer -->
<path d="M549.8 553 H554.5 L556 554.5 H565.9 V567.4 H549.8 Z" fill="#f5b82e"/>
<rect x="549.8" y="555.5" width="16.1" height="11.9" fill="#fcd35a"/>
<rect x="553" y="563.5" width="9.6" height="3.5" fill="#1d74cf"/>
<!-- edge -->
<circle cx="586.9" cy="560" r="7.9" fill="url(#edge)"/>
<path d="M586.9 552.1 A7.9 7.9 0 0 1 594.8 560 C594.8 562 593 563 590.5 563 L588 560 C589 557 588 554 586.9 552.1Z" fill="#4cc26a"/>
<path d="M594.8 560.5 C594 563 592 563.5 589.5 563 C587.5 562.5 587 561 587.5 559.8 C588.3 558.3 590 558.3 591 559.3 Z" fill="#c9ecea"/>
<path d="M583.5 562 C583.5 565 586.5 567.5 590 567.6 C592.5 567.6 594.3 566.3 594.8 565.5 C592 566.5 588.5 566 587 563.5 Z" fill="#0c4a98"/>
<!-- store -->
<rect x="608.4" y="555" width="15.6" height="12.9" rx="2" fill="#1f4b8e"/>
<path d="M612.5 555.5 V554 C612.5 552.5 620 552.5 620 554 V555.5" fill="none" stroke="#4ec0f0" stroke-width="1.3"/>
<rect x="613" y="558" width="3" height="3" fill="#f25022"/><rect x="616.6" y="558" width="3" height="3" fill="#7fba00"/>
<rect x="613" y="561.6" width="3" height="3" fill="#00a4ef"/><rect x="616.6" y="561.6" width="3" height="3" fill="#ffb900"/>
<!-- outlook -->
<path d="M642 554 L650 553 L654 556 V566 H642 Z" fill="#1e90e8"/>
<rect x="642" y="562" width="12" height="5.5" fill="#28b8e8"/>
<rect x="637.8" y="555.5" width="8.5" height="9" rx="1" fill="#0f6cd0"/>
<ellipse cx="642" cy="560" rx="2" ry="2.6" fill="none" stroke="#fff" stroke-width="1.1"/>
<!-- chrome -->
<circle cx="675.2" cy="559.9" r="8" fill="#e94235"/>
<path d="M675.2 559.9 L668.3 555.9 A8 8 0 0 0 671.2 566.8 Z" fill="#34a853"/>
<path d="M675.2 559.9 L671.2 566.8 A8 8 0 0 0 683.2 559.9 Z" fill="#fbbc04"/>
<path d="M675.2 559.9 L683.2 559.9 A8 8 0 0 0 682.1 555.9 Z" fill="#fbbc04"/>
<circle cx="675.2" cy="559.9" r="3.8" fill="#fff"/>
<circle cx="675.2" cy="559.9" r="3" fill="#4285f4"/>
<rect x="673.5" y="571.5" width="3.5" height="1.5" rx="0.75" fill="#7a7a7a"/>
<!-- ai -->
<rect x="692" y="546.9" width="24.9" height="26.4" rx="3" fill="#e6f3f7" opacity="0.9"/>
<rect x="696.9" y="551.8" width="14.9" height="14.7" rx="2.5" fill="#330000"/>
<rect x="699.5" y="570.9" width="10.1" height="2" rx="1" fill="#0a6cd4"/>
<!-- tray -->
<path d="M854.8 562 L858.3 558 L861.8 562" fill="none" stroke="#333" stroke-width="1.1"/>
<path d="M874.5 563.5 C873 563.5 873 559.5 875.5 559 C876 556 881 555.5 882.5 558 C885 558 886 563.5 884 563.5 Z" fill="#555" stroke="#333" stroke-width="0.9"/>
<path d="M874 556 L884.8 564.8" stroke="#cde9ef" stroke-width="1.8"/><path d="M874 556 L884.8 564.8" stroke="#333" stroke-width="0.9"/>
<path d="M896.8 565 L901 555.3 L905.2 565 M898.5 561.3 H903.5" fill="none" stroke="#444" stroke-width="0.9"/>
<path d="M916.8 558.3 A8 8 0 0 1 927.5 558.3 M918.6 560.3 A5.3 5.3 0 0 1 925.7 560.3 M920.4 562.2 A2.8 2.8 0 0 1 923.9 562.2" fill="none" stroke="#333" stroke-width="1"/>
<circle cx="922.15" cy="563.8" r="0.8" fill="#333"/>
<path d="M932.5 558 H935 L938 555.5 V564.5 L935 562 H932.5 Z" fill="none" stroke="#333" stroke-width="0.9"/>
<path d="M939.5 558 L942.8 561.5 M942.8 558 L939.5 561.5" stroke="#333" stroke-width="0.9"/>
<rect x="948.8" y="557.5" width="9.5" height="6" rx="1" fill="#333" stroke="#333" stroke-width="0.8"/>
<rect x="958.5" y="559.3" width="1.4" height="2.4" fill="#333"/>
<path d="M950 556.5 L951.5 554.5 L951 556.5 L953 555" stroke="#333" stroke-width="0.8" fill="none"/>
</svg>
<div class="t f" style="left:35.2px;top:549.5px;width:56.2px;font-size:9px;color:#2a2a2a;line-height:11px">Trending videos</div>
<div class="t f" style="left:35.2px;top:559.5px;width:61.8px;font-size:9px;color:#5c5c5c;line-height:11px">牛たちが観光客の...</div>
<div class="t" style="left:24.2px;top:549.3px;font-size:7px;color:#fff;line-height:9px">5</div>
<div class="t f" style="left:361.2px;top:555px;width:18px;font-size:9px;color:#555;line-height:11px">検索</div>
<svg style="left:0;top:0" width="1024" height="576" viewBox="0 0 1024 576"><path d="M699.6 562.7 L701.9 555.2 H703.6 L705.9 562.7 H704.4 L703.9 561 H701.6 L701.1 562.7 Z M702 559.7 H703.5 L702.75 557 Z" fill="#ff9a00" fill-rule="evenodd"/><rect x="706.9" y="557.6" width="1.4" height="5.1" fill="#ff9a00"/><rect x="706.9" y="555.3" width="1.4" height="1.4" fill="#ff9a00"/></svg>
<div class="t f" style="left:993.1px;top:548.5px;width:17.8px;font-size:8.5px;color:#222;line-height:11px">11:17</div>
<div class="t f" style="left:970.6px;top:559.5px;width:39.7px;font-size:8.5px;color:#222;line-height:11px">2025/07/31</div>

<script>
document.querySelectorAll('.f').forEach(function(e){
  var w=parseFloat(e.style.width);
  e.style.width='auto';
  var n=e.getBoundingClientRect().width;
  if(n>0){e.style.transform='scaleX('+(w/n)+')';}
});
</script>
</body></html>
